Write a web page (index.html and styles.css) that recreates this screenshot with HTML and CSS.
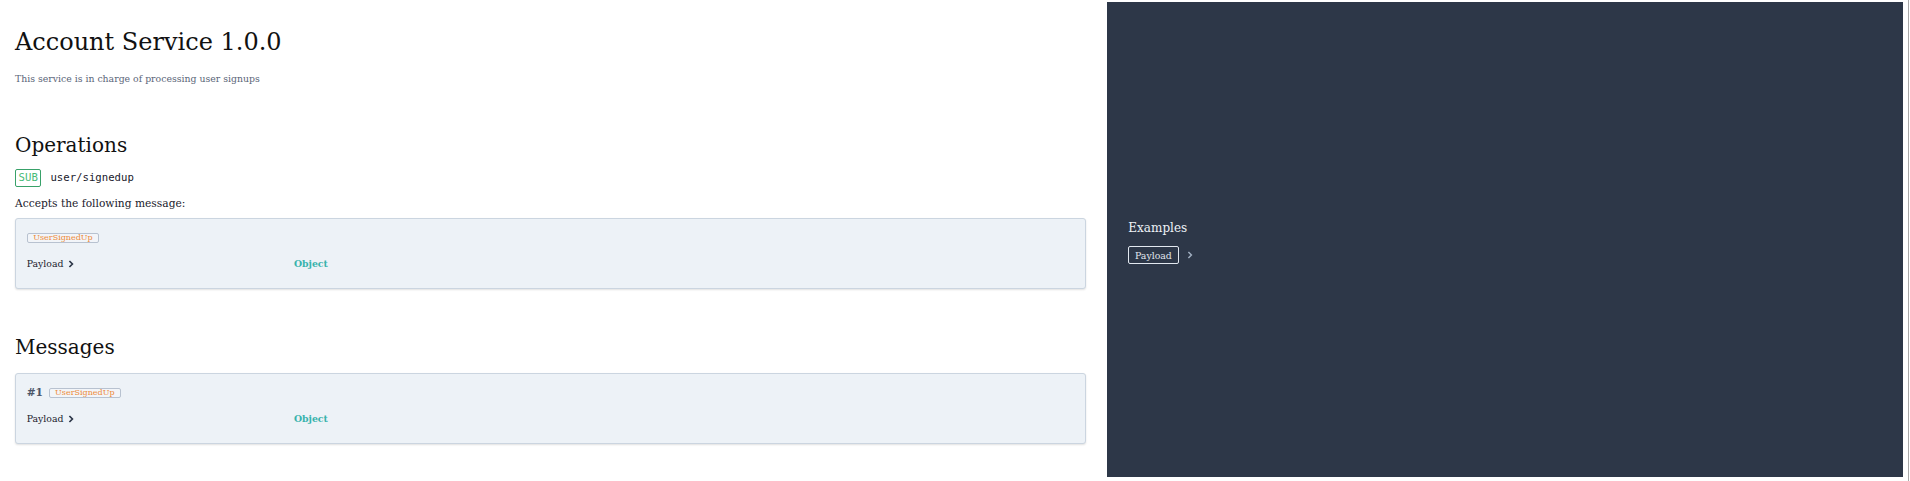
FILE: index.html
```html
<!DOCTYPE html>
<html lang="en">
<head>
<meta charset="utf-8">
<title>Account Service 1.0.0</title>
<link rel="stylesheet" href="styles.css">
</head>
<body>
<div class="page">
  <main class="doc">
    <h1 class="title">Account Service 1.0.0</h1>
    <p class="subtitle">This service is in charge of processing user signups</p>

    <h2 class="section-title section-ops">Operations</h2>
    <div class="op-row">
      <span class="op-kind">SUB</span>
      <span class="op-channel">user/signedup</span>
    </div>
    <p class="accepts">Accepts the following message:</p>
    <div class="card card-op">
      <div class="card-head">
        <span class="msg-badge">UserSignedUp</span>
      </div>
      <div class="payload-row">
        <div class="payload-name">Payload
          <svg class="chev" width="6" height="8" viewBox="0 0 6 8"><path d="M1.4 1 L4.4 4 L1.4 7" fill="none" stroke="currentColor" stroke-width="1.7"/></svg>
        </div>
        <div class="payload-type">Object</div>
      </div>
    </div>

    <h2 class="section-title section-msgs">Messages</h2>
    <div class="card card-msg">
      <div class="card-head">
        <span class="msg-num">#1</span>
        <span class="msg-badge">UserSignedUp</span>
      </div>
      <div class="payload-row">
        <div class="payload-name">Payload
          <svg class="chev" width="6" height="8" viewBox="0 0 6 8"><path d="M1.4 1 L4.4 4 L1.4 7" fill="none" stroke="currentColor" stroke-width="1.7"/></svg>
        </div>
        <div class="payload-type">Object</div>
      </div>
    </div>
  </main>

  <aside class="examples">
    <div class="examples-title">Examples</div>
    <div class="examples-row">
      <span class="examples-btn">Payload</span>
      <svg class="chev chev-light" width="6" height="8" viewBox="0 0 6 8"><path d="M1.4 1 L4.4 4 L1.4 7" fill="none" stroke="currentColor" stroke-width="1.5"/></svg>
    </div>
  </aside>
  <div class="edge-gap"></div>
  <div class="edge-line"></div>
</div>
</body>
</html>
```

FILE: styles.css
```css
html, body {
  margin: 0;
  padding: 0;
  background: #ffffff;
}
body {
  font-family: "DejaVu Serif", serif;
  color: #1a202c;
  overflow: hidden;
}
.page {
  display: flex;
  align-items: flex-start;
  width: 1910px;
  height: 481px;
}
.doc {
  box-sizing: border-box;
  width: 1107px;
  flex: none;
  padding: 0 21px 0 15px;
}
.title {
  margin: 26px 0 0 0;
  font-size: 24px;
  line-height: 32px;
  font-weight: normal;
  color: #111111;
}
.subtitle {
  margin: 14px 0 0 0;
  font-size: 9.33px;
  line-height: 14px;
  color: #5a6578;
}
.section-title {
  margin: 0;
  font-size: 20px;
  line-height: 28px;
  font-weight: normal;
  color: #111111;
}
.section-ops { margin-top: 44.8px; }
.section-msgs { margin-top: 44.7px; }
.op-row {
  display: flex;
  align-items: center;
  gap: 9px;
  margin-top: 10.5px;
}
.op-kind {
  font-family: "DejaVu Sans Mono", monospace;
  font-size: 10.67px;
  line-height: 11.4px;
  padding: 2px 2.6px;
  border: 1px solid #38a169;
  border-radius: 2px;
  color: #48bb78;
}
.op-channel {
  font-family: "DejaVu Sans Mono", monospace;
  font-size: 10.67px;
  line-height: 14px;
  color: #1a202c;
}
.accepts {
  margin: 9.1px 0 0 0;
  font-size: 10.67px;
  line-height: 16px;
  color: #1a202c;
}
.card {
  box-sizing: border-box;
  background: #edf2f7;
  border: 1px solid #cbd5e0;
  border-radius: 3px;
  box-shadow: 0 1px 2px rgba(0, 0, 0, 0.12);
  padding: 10.67px 10.67px 16.5px 10.67px;
}
.card-op { margin-top: 6.5px; }
.card-msg { margin-top: 11.9px; }
.card-head {
  display: flex;
  align-items: center;
  height: 16px;
  gap: 5.5px;
}
.msg-num {
  font-size: 10.67px;
  line-height: 16px;
  font-weight: bold;
  color: #4a5568;
}
.msg-badge {
  font-family: "DejaVu Serif", serif;
  font-size: 8px;
  line-height: 8.67px;
  padding: 0 5.6px;
  border: 1px solid #b8c2d0;
  border-radius: 2px;
  color: #ed8936;
  background: #f2f5f9;
}
.payload-row {
  display: flex;
  margin-top: 11.2px;
  line-height: 14px;
  font-size: 9.33px;
}
.payload-name {
  box-sizing: border-box;
  width: 25%;
  margin-right: 5.33px;
  flex: none;
  display: flex;
  align-items: center;
  gap: 4.5px;
  color: #1a202c;
}
.chev {
  display: block;
  color: #2d3748;
}
.payload-type {
  font-weight: bold;
  color: #38b2ac;
}
.examples {
  box-sizing: border-box;
  width: 796px;
  height: 475px;
  margin-top: 2px;
  flex: none;
  background: #2d3748;
  padding: 5.5px 21.33px 0 21.33px;
  display: flex;
  flex-direction: column;
  justify-content: center;
}
.examples-title {
  font-size: 12px;
  line-height: 16px;
  color: #edf2f7;
}
.examples-row {
  display: flex;
  align-items: center;
  gap: 8px;
  margin-top: 9.8px;
}
.examples-btn {
  font-size: 9.33px;
  line-height: 11px;
  padding: 2.67px 5.7px;
  border: 1px solid #e2e8f0;
  border-radius: 2px;
  color: #e2e8f0;
}
.chev-light {
  color: #a0aec0;
}
.edge-gap {
  width: 5px;
  flex: none;
}
.edge-line {
  width: 1px;
  height: 481px;
  flex: none;
  background: #a8a8a8;
}
```
